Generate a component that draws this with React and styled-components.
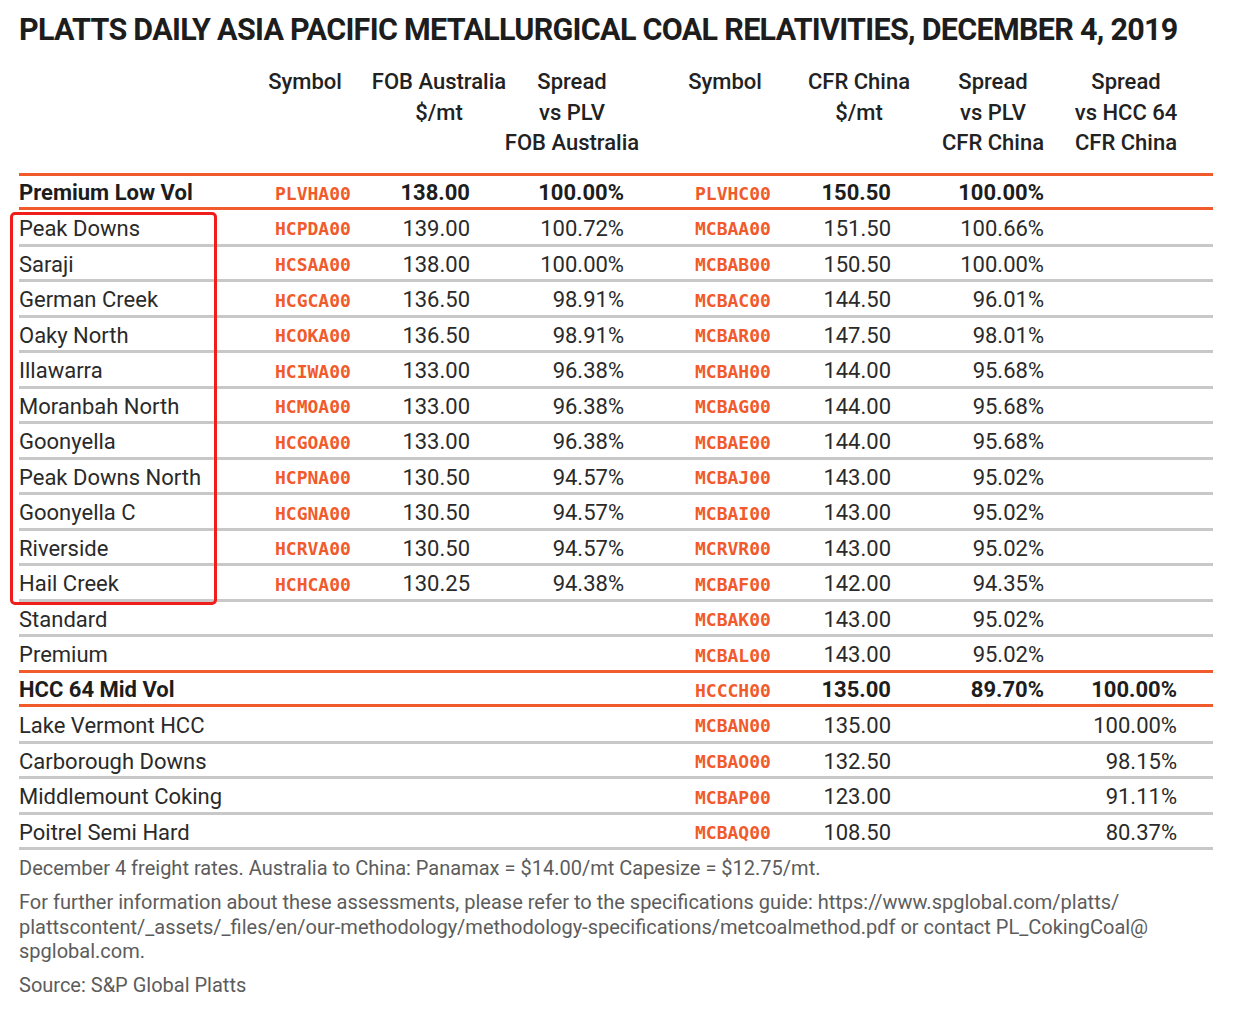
import styled, { createGlobalStyle } from "styled-components";

const GlobalStyle = createGlobalStyle`
    body {
        margin: 0;
        background: #ffffff;
        font-family: Roboto, "Liberation Sans", sans-serif;
        color: #222;
    }
`;

const COLS = "221px 130px 138px 128px 24px 130px 138px 130px 136px 19px";
const ORANGE = "#f15a2b";

const Page = styled.div`
    width: 1194px;
    padding: 12px 19px 0 19px;
`;

const Title = styled.h1`
    margin: 0;
    font-size: 30.5px;
    line-height: 36px;
    font-weight: 700;
    letter-spacing: -0.7px;
    color: #1d1d1d;
    white-space: nowrap;
`;

const Table = styled.div`
    margin-top: 19px;
`;

const Body = styled.div`
    position: relative;
`;

const Row = styled.div`
    display: grid;
    grid-template-columns: ${COLS};
    align-items: center;
    height: ${(p) => p.$h || "32.5px"};
    border-bottom: 3px solid ${(p) => (p.$accent ? ORANGE : "#c8c8c8")};
`;

const HeadRow = styled.div`
    display: grid;
    grid-template-columns: ${COLS};
    align-items: start;
    padding-bottom: 14px;
    border-bottom: 3px solid ${ORANGE};
`;

const HeadCell = styled.div`
    display: flex;
    flex-direction: column;
    align-items: center;
    font-size: 22px;
    line-height: 30.5px;
    font-weight: 500;
    color: #222;
    white-space: nowrap;
`;

const Name = styled.div`
    font-size: 22px;
    padding-top: 3px;
    font-weight: ${(p) => (p.$bold ? 700 : 400)};
    color: ${(p) => (p.$bold ? "#1d1d1d" : "#2a2a2a")};
    white-space: nowrap;
`;

const Code = styled.div`
    font-family: "DejaVu Sans Mono", "Liberation Mono", monospace;
    font-weight: 700;
    font-size: 18px;
    color: ${ORANGE};
    padding-left: 35px;
    padding-top: 4px;
`;

const Num = styled.div`
    font-size: 22px;
    padding-top: 3px;
    text-align: right;
    padding-right: ${(p) => p.$pr}px;
    font-weight: ${(p) => (p.$bold ? 700 : 400)};
    color: ${(p) => (p.$bold ? "#1d1d1d" : "#2a2a2a")};
    white-space: nowrap;
`;

const Spacer = styled.div``;

const Highlight = styled.div`
    position: absolute;
    left: -9px;
    top: 36px;
    width: 207px;
    height: 393px;
    box-sizing: border-box;
    border: 3px solid #f01e1a;
    border-radius: 5px;
    pointer-events: none;
`;

const Notes = styled.div`
    margin-top: 6px;
    font-size: 20px;
    line-height: 24.5px;
    color: #5c5c5c;
`;

const Note = styled.p`
    margin: 0 0 9.5px 0;
    white-space: nowrap;
`;

const rows = [
    { name: "Premium Low Vol", bold: true, accent: true, h: "31px", s1: "PLVHA00", fob: "138.00", sf: "100.00%", s2: "PLVHC00", cfr: "150.50", sc: "100.00%" },
    { name: "Peak Downs", h: "34px", s1: "HCPDA00", fob: "139.00", sf: "100.72%", s2: "MCBAA00", cfr: "151.50", sc: "100.66%" },
    { name: "Saraji", s1: "HCSAA00", fob: "138.00", sf: "100.00%", s2: "MCBAB00", cfr: "150.50", sc: "100.00%" },
    { name: "German Creek", s1: "HCGCA00", fob: "136.50", sf: "98.91%", s2: "MCBAC00", cfr: "144.50", sc: "96.01%" },
    { name: "Oaky North", s1: "HCOKA00", fob: "136.50", sf: "98.91%", s2: "MCBAR00", cfr: "147.50", sc: "98.01%" },
    { name: "Illawarra", s1: "HCIWA00", fob: "133.00", sf: "96.38%", s2: "MCBAH00", cfr: "144.00", sc: "95.68%" },
    { name: "Moranbah North", s1: "HCMOA00", fob: "133.00", sf: "96.38%", s2: "MCBAG00", cfr: "144.00", sc: "95.68%" },
    { name: "Goonyella", s1: "HCGOA00", fob: "133.00", sf: "96.38%", s2: "MCBAE00", cfr: "144.00", sc: "95.68%" },
    { name: "Peak Downs North", s1: "HCPNA00", fob: "130.50", sf: "94.57%", s2: "MCBAJ00", cfr: "143.00", sc: "95.02%" },
    { name: "Goonyella C", s1: "HCGNA00", fob: "130.50", sf: "94.57%", s2: "MCBAI00", cfr: "143.00", sc: "95.02%" },
    { name: "Riverside", s1: "HCRVA00", fob: "130.50", sf: "94.57%", s2: "MCRVR00", cfr: "143.00", sc: "95.02%" },
    { name: "Hail Creek", s1: "HCHCA00", fob: "130.25", sf: "94.38%", s2: "MCBAF00", cfr: "142.00", sc: "94.35%" },
    { name: "Standard", s2: "MCBAK00", cfr: "143.00", sc: "95.02%" },
    { name: "Premium", accent: true, s2: "MCBAL00", cfr: "143.00", sc: "95.02%" },
    { name: "HCC 64 Mid Vol", bold: true, accent: true, h: "31px", s2: "HCCCH00", cfr: "135.00", sc: "89.70%", sh: "100.00%" },
    { name: "Lake Vermont HCC", h: "34px", s2: "MCBAN00", cfr: "135.00", sh: "100.00%" },
    { name: "Carborough Downs", s2: "MCBAO00", cfr: "132.50", sh: "98.15%" },
    { name: "Middlemount Coking", s2: "MCBAP00", cfr: "123.00", sh: "91.11%" },
    { name: "Poitrel Semi Hard", s2: "MCBAQ00", cfr: "108.50", sh: "80.37%" },
];

const headers = [
    ["Symbol"],
    ["FOB Australia", "$/mt"],
    ["Spread", "vs PLV", "FOB Australia"],
    null,
    ["Symbol"],
    ["CFR China", "$/mt"],
    ["Spread", "vs PLV", "CFR China"],
    ["Spread", "vs HCC 64", "CFR China"],
];

const App = () => {
    return (
        <Page>
            <GlobalStyle />
            <Title>PLATTS DAILY ASIA PACIFIC METALLURGICAL COAL RELATIVITIES, DECEMBER 4, 2019</Title>
            <Table>
                <HeadRow>
                    <Spacer />
                    {headers.map((lines, i) =>
                        lines ? (
                            <HeadCell key={i}>
                                {lines.map((l) => (
                                    <span key={l}>{l}</span>
                                ))}
                            </HeadCell>
                        ) : (
                            <Spacer key={i} />
                        )
                    )}
                    <Spacer />
                </HeadRow>
                <Body>
                    {rows.map((r) => (
                        <Row key={r.name} $accent={r.accent} $h={r.h}>
                            <Name $bold={r.bold}>{r.name}</Name>
                            <Code>{r.s1}</Code>
                            <Num $pr={38} $bold={r.bold}>{r.fob}</Num>
                            <Num $pr={12} $bold={r.bold}>{r.sf}</Num>
                            <Spacer />
                            <Code>{r.s2}</Code>
                            <Num $pr={37} $bold={r.bold}>{r.cfr}</Num>
                            <Num $pr={14} $bold={r.bold}>{r.sc}</Num>
                            <Num $pr={17} $bold={r.bold}>{r.sh}</Num>
                            <Spacer />
                        </Row>
                    ))}
                    <Highlight />
                </Body>
            </Table>
            <Notes>
                <Note>December 4 freight rates. Australia to China: Panamax = $14.00/mt Capesize = $12.75/mt.</Note>
                <Note>
                    For further information about these assessments, please refer to the specifications guide: https://www.spglobal.com/platts/
                    <br />
                    plattscontent/_assets/_files/en/our-methodology/methodology-specifications/metcoalmethod.pdf or contact PL_CokingCoal@
                    <br />
                    spglobal.com.
                </Note>
                <Note>Source: S&amp;P Global Platts</Note>
            </Notes>
        </Page>
    );
};

export default App;
